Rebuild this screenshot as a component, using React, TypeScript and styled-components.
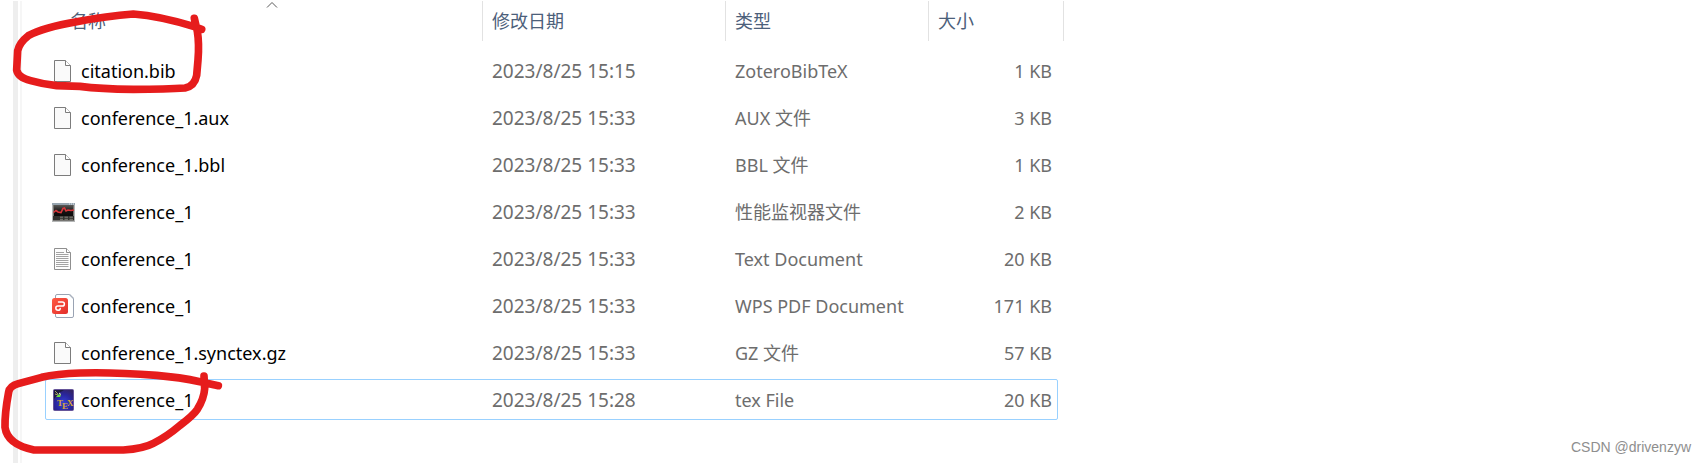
import React from "react";
import styled, { createGlobalStyle } from "styled-components";

const GlobalStyle = createGlobalStyle`
  *, *::before, *::after { box-sizing: border-box; }
  body {
    margin: 0;
    background: #ffffff;
    font-family: "Noto Sans", "Noto Sans CJK SC", sans-serif;
    font-size: 18px;
    line-height: 24px;
  }
`;

const Page = styled.main`
  position: relative;
  display: flex;
  min-height: 100vh;
  padding: 1px 0 0 13px;
  overflow: hidden;
`;

const PaneEdge = styled.div`
  flex: none;
  width: 9px;
  margin-right: 23px;
  border-left: 5px solid #eeeeee;
  border-right: 2px solid #f6f6f6;
`;

const FileTable = styled.table`
  flex: none;
  align-self: flex-start;
  width: 1019px;
  table-layout: fixed;
  border-collapse: collapse;
`;

const Col = styled.col<{ $width: number }>`
  width: ${({ $width }) => $width}px;
`;

const HeadCell = styled.th`
  height: 46px;
  padding: 0;
  vertical-align: top;
  font-weight: 400;
`;

const HeadButton = styled.button<{ $indent?: boolean }>`
  position: relative;
  display: block;
  width: ${({ $indent }) => ($indent ? "calc(100% - 16px)" : "100%")};
  height: 40px;
  margin: 0 0 0 ${({ $indent }) => ($indent ? 16 : 0)}px;
  padding: 0 9px;
  border: 0;
  border-right: 1px solid #e2e2e2;
  background: none;
  color: #4c607a;
  font: inherit;
  text-align: left;
`;

const SortMark = styled.svg`
  position: absolute;
  top: 0;
  left: calc(50% - 6px);
`;

const Row = styled.tr<{ $focused: boolean }>`
  position: relative;

  &::after {
    content: "";
    display: ${({ $focused }) => ($focused ? "block" : "none")};
    position: absolute;
    inset: 3px 6px 3px 0;
    border: 1px solid #99d1ff;
    border-radius: 2px;
    pointer-events: none;
  }
`;

const Cell = styled.td<{ $right?: boolean }>`
  height: 47px;
  padding: 0 ${({ $right }) => ($right ? 6 : 9)}px;
  color: #6d6d6d;
  text-align: ${({ $right }) => ($right ? "right" : "left")};
  white-space: nowrap;
`;

const NameCell = styled(Cell)`
  padding-left: 6px;
  color: #000000;
`;

const DateCell = styled(Cell)`
  font-size: 19px;
`;

const FileName = styled.div`
  display: flex;
  align-items: center;
  gap: 6px;
`;

const Icon = styled.svg`
  flex: none;
  width: 24px;
  height: 25px;
`;

const Ink = styled.svg`
  position: absolute;
  top: 0;
  left: 0;
  width: 300px;
  height: 463px;
  pointer-events: none;
`;

const Watermark = styled.div`
  position: absolute;
  right: 15px;
  bottom: 6px;
  color: #8e8e8e;
  font-family: "Liberation Sans", sans-serif;
  font-size: 14px;
  line-height: 20px;
`;

type Kind = "blank" | "monitor" | "text" | "pdf" | "tex";

const PageOutline = () => (
  <>
    <path d="M3.5 2.5H14.5L19.5 7.5V23.5H3.5Z" fill="#fafafa" stroke="#7c7c7c" />
    <path d="M14.5 2.5V7.5H19.5" fill="#ffffff" stroke="#7c7c7c" />
  </>
);

const FileIcon = ({ kind }: { kind: Kind }) => (
  <Icon viewBox="0 0 24 25" aria-hidden="true">
    {kind === "blank" && <PageOutline />}
    {kind === "text" && (
      <>
        <path d="M3.5 2.5H15.5L19.5 6.5V23.5H3.5Z" fill="#fdfdfd" stroke="#8f8f8f" />
        <path d="M15.5 2.5V6.5H19.5" fill="#fff" stroke="#8f8f8f" />
        <path
          d="M5 6.5H13M5 8.5H17.5M5 10.5H17.5M5 12.5H17.5M5 14.5H17.5M5 16.5H17.5M5 18.5H17.5M5 20.5H17.5"
          stroke="#a3a3a3"
          fill="none"
        />
      </>
    )}
    {kind === "monitor" && (
      <>
        <defs>
          <linearGradient id="screen" x1="0" y1="0" x2="0" y2="1">
            <stop offset="0" stopColor="#5a5a57" />
            <stop offset="0.6" stopColor="#141212" />
            <stop offset="1" stopColor="#0c0b0b" />
          </linearGradient>
        </defs>
        <rect x="1" y="4" width="23" height="19" fill="#b4b6b6" />
        <rect x="1" y="4" width="23" height="2" fill="#97a5b0" />
        <path d="M18 5H23" stroke="#e1e6ef" strokeDasharray="1 1" />
        <rect x="2" y="6" width="21" height="16" fill="#767572" />
        <rect x="3" y="6" width="19" height="11" fill="url(#screen)" />
        <path
          d="M2.5 13.5L5 11.5L7 13L10 13.5L12 9.5L13.5 9L15 12L17 11L20 11.5L23 11"
          fill="none"
          stroke="#d8363a"
          strokeWidth="1.6"
        />
        <rect x="2" y="17" width="21" height="4" fill="#33322f" />
        <path d="M9 18.2H12M13.5 18.2H17M18.5 18.2H22M9 20.3H12M13.5 20.3H17M18.5 20.3H22" stroke="#85837b" />
      </>
    )}
    {kind === "pdf" && (
      <>
        <defs>
          <linearGradient id="badge" x1="0" y1="0" x2="1" y2="1">
            <stop offset="0" stopColor="#ff5a43" />
            <stop offset="1" stopColor="#e22e2b" />
          </linearGradient>
        </defs>
        <path
          d="M6 1.5H18.5L22.5 5.5V23Q22.5 24.5 21 24.5H6Q4.5 24.5 4.5 23V3Q4.5 1.5 6 1.5Z"
          fill="#ffffff"
          stroke="#9aa3b3"
        />
        <path d="M18.5 1.5L22.5 5.5" stroke="#a9b1be" strokeWidth="1.4" />
        <rect x="1" y="5" width="16" height="16" rx="2.5" fill="url(#badge)" />
        <path
          d="M7.5 9H11.2Q13.4 9 13.4 11Q13.4 13.1 11.2 13.1H7Q4.8 13.1 4.8 15.1Q4.8 17.2 7 17.2Q9.2 17.2 9.2 15.4"
          fill="none"
          stroke="#ffffff"
          strokeWidth="1.5"
          strokeLinecap="round"
        />
      </>
    )}
    {kind === "tex" && (
      <>
        <defs>
          <radialGradient id="night" cx="0.5" cy="0.65" r="0.7">
            <stop offset="0" stopColor="#3440d8" />
            <stop offset="0.6" stopColor="#29259c" />
            <stop offset="1" stopColor="#332463" />
          </radialGradient>
        </defs>
        <rect x="2.5" y="2.5" width="20" height="21" rx="1" fill="url(#night)" stroke="#66559a" />
        <path d="M3 3H13L8 6L3 12Z" fill="#1c1b3f" />
        <path d="M4 4L7 7M4 7L7 8" stroke="#c9c86a" strokeWidth="0.8" />
        <path d="M5 10L8 7L10 8.5L9 10Z" fill="#6ee03c" />
        <path d="M8 6L10 7.5" stroke="#f4f8c0" strokeWidth="1" />
        <g fill="#d6a53c" fontFamily="Liberation Serif, serif" fontWeight="700" fontSize="9">
          <text x="6" y="19">T</text>
          <text x="11" y="22">E</text>
          <text x="16" y="19">X</text>
        </g>
      </>
    )}
  </Icon>
);

interface FileEntry {
  name: string;
  date: string;
  type: string;
  size: string;
  kind: Kind;
  focused?: boolean;
}

const files: FileEntry[] = [
  { name: "citation.bib", date: "2023/8/25 15:15", type: "ZoteroBibTeX", size: "1 KB", kind: "blank" },
  { name: "conference_1.aux", date: "2023/8/25 15:33", type: "AUX 文件", size: "3 KB", kind: "blank" },
  { name: "conference_1.bbl", date: "2023/8/25 15:33", type: "BBL 文件", size: "1 KB", kind: "blank" },
  { name: "conference_1", date: "2023/8/25 15:33", type: "性能监视器文件", size: "2 KB", kind: "monitor" },
  { name: "conference_1", date: "2023/8/25 15:33", type: "Text Document", size: "20 KB", kind: "text" },
  { name: "conference_1", date: "2023/8/25 15:33", type: "WPS PDF Document", size: "171 KB", kind: "pdf" },
  { name: "conference_1.synctex.gz", date: "2023/8/25 15:33", type: "GZ 文件", size: "57 KB", kind: "blank" },
  { name: "conference_1", date: "2023/8/25 15:28", type: "tex File", size: "20 KB", kind: "tex", focused: true },
];

export default function App() {
  return (
    <>
      <GlobalStyle />
      <Page>
        <PaneEdge />
        <FileTable>
          <colgroup>
            <Col $width={438} />
            <Col $width={243} />
            <Col $width={203} />
            <Col $width={129} />
            <Col $width={6} />
          </colgroup>
          <thead>
            <tr>
              <HeadCell scope="col" aria-sort="ascending">
                <HeadButton type="button" $indent>
                  名称
                  <SortMark width="12" height="8" viewBox="0 0 12 8" aria-hidden="true">
                    <path d="M1 6.5L6 1.5L11 6.5" fill="none" stroke="#5a5a5a" />
                  </SortMark>
                </HeadButton>
              </HeadCell>
              <HeadCell scope="col">
                <HeadButton type="button">修改日期</HeadButton>
              </HeadCell>
              <HeadCell scope="col">
                <HeadButton type="button">类型</HeadButton>
              </HeadCell>
              <HeadCell scope="col" colSpan={2}>
                <HeadButton type="button">大小</HeadButton>
              </HeadCell>
            </tr>
          </thead>
          <tbody>
            {files.map((file, index) => (
              <Row key={index} $focused={Boolean(file.focused)}>
                <NameCell>
                  <FileName>
                    <FileIcon kind={file.kind} />
                    {file.name}
                  </FileName>
                </NameCell>
                <DateCell>{file.date}</DateCell>
                <Cell>{file.type}</Cell>
                <Cell $right>{file.size}</Cell>
              </Row>
            ))}
          </tbody>
        </FileTable>
        <Ink viewBox="0 0 900 1389" aria-hidden="true">
          <g fill="none" stroke="#e61c1c" strokeWidth="23" strokeLinecap="round" strokeLinejoin="round">
            <path d="M605 88L583 80Q480 48 400 42Q320 48 230 65Q130 82 85 107Q58 128 53 152L50 210Q54 232 92 242Q130 253 170 257L240 259Q300 267 400 268Q500 268 555 264Q584 258 590 226L594 180Q598 130 592 94L583 55" />
            <path d="M655 1157L600 1145Q540 1132 470 1126Q340 1116 240 1119Q170 1121 125 1132L55 1151Q29 1158 26 1176Q14 1240 15 1282Q22 1334 102 1350H260H370Q430 1346 460 1330Q500 1310 540 1276Q580 1246 592 1228Q612 1195 614 1166L612 1128" />
          </g>
        </Ink>
        <Watermark>CSDN @drivenzyw</Watermark>
      </Page>
    </>
  );
}
